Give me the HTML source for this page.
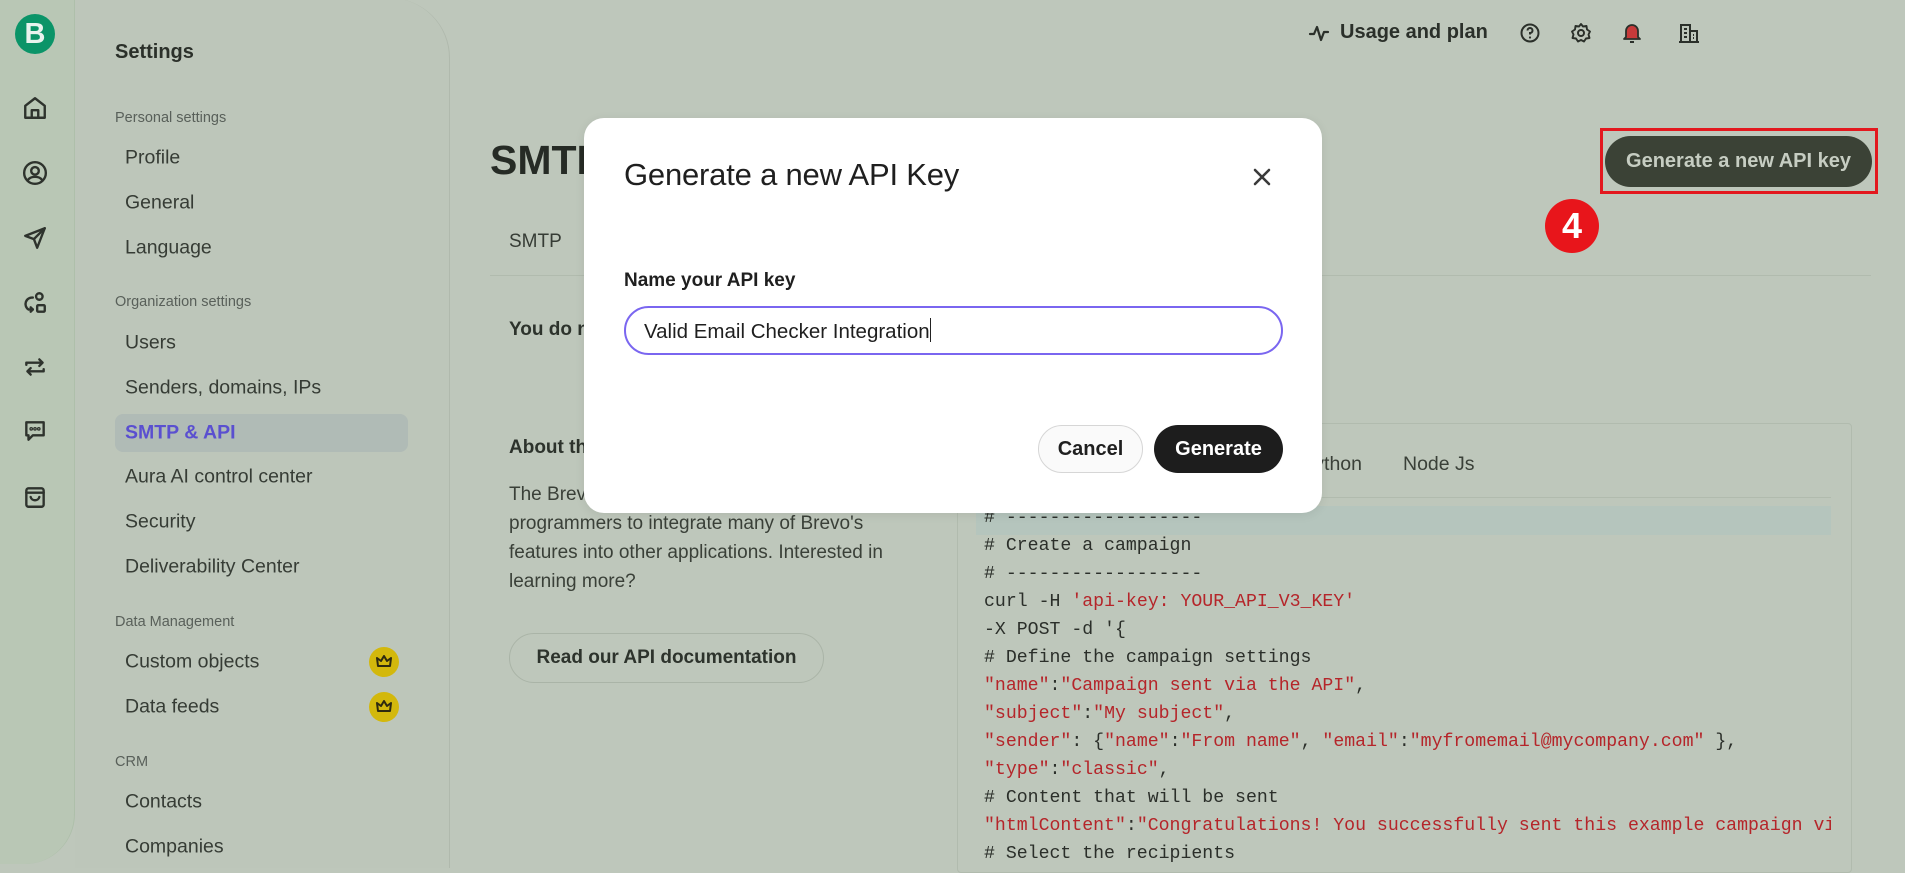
<!DOCTYPE html>
<html><head><meta charset="utf-8"><style>
*{margin:0;padding:0;box-sizing:border-box}
body{width:1905px;height:864px;overflow:hidden;background:#bec7bb;font-family:"Liberation Sans",sans-serif;color:#2d332c;position:relative}
.a{position:absolute;white-space:nowrap}
#rail{position:absolute;left:0;top:0;width:75px;height:864px;background:#b9c7b5;border-right:1px solid #aebfaa;border-bottom-right-radius:50px}
#panel{position:absolute;left:75px;top:-2px;width:375px;height:870px;border-right:1px solid #b0b9ad;border-top-right-radius:60px;background:#bdc6ba}
.lbl{font-size:14.5px;color:#59605a;left:115px}
.it{font-size:19.5px;color:#363c35;left:125px;transform:translateY(-50%)}
.ico{position:absolute;left:22px;width:26px;height:26px}
.ico path,.ico rect,.ico circle{fill:none;stroke:#2e332d;stroke-width:2.2;stroke-linecap:round;stroke-linejoin:round}
.crown{position:absolute;left:369px;width:30px;height:30px;border-radius:50%;background:#d3b80c}
.code{font-family:"Liberation Mono",monospace;font-size:18.2px;left:984px;color:#2b2f2a}
.r{color:#b5252a}
</style></head><body>
<div id="rail">
 <div class="a" style="left:15px;top:14px;width:40px;height:40px;border-radius:50%;background:#0b9468;color:#e8f3ee;font-weight:bold;font-size:29px;text-align:center;line-height:40px">B</div>
 <svg class="ico" style="top:95px" viewBox="0 0 24 24"><path d="M3 10 L12 3 L21 10 V21 H3 Z"/><path d="M9 21 V14 H15 V21"/></svg>
 <svg class="ico" style="top:160px" viewBox="0 0 24 24"><circle cx="12" cy="12" r="10"/><circle cx="12" cy="10" r="3.5"/><path d="M5.5 18.5 C8 14.5 16 14.5 18.5 18.5"/></svg>
 <svg class="ico" style="top:225px" viewBox="0 0 24 24"><path d="M21 3 L3 10 L11 13 L14 21 Z"/><path d="M21 3 L11 13"/></svg>
 <svg class="ico" style="top:290px" viewBox="0 0 24 24"><circle cx="16" cy="6" r="3"/><path d="M10 7 A6 6 0 0 0 6 18 L10 18"/><path d="M8 16 L10 18 L8 20"/><rect x="14" y="14" width="7" height="6" rx="1"/></svg>
 <svg class="ico" style="top:354px" viewBox="0 0 24 24"><path d="M4 10 V8 H19 M16 5 L19 8 L16 11"/><path d="M20 14 V16 H5 M8 13 L5 16 L8 19"/></svg>
 <svg class="ico" style="top:418px" viewBox="0 0 24 24"><path d="M4 4 H20 V16 H10 L6 20 V16 H4 Z"/><circle cx="8.5" cy="10" r=".6"/><circle cx="12" cy="10" r=".6"/><circle cx="15.5" cy="10" r=".6"/></svg>
 <svg class="ico" style="top:484px" viewBox="0 0 24 24"><rect x="4" y="4" width="16" height="17" rx="2"/><path d="M4 8 H20"/><path d="M8 12 C9 16 15 16 16 12"/></svg>
</div>
<div id="panel"></div>
<div class="a" style="left:115px;top:41px;font-size:20px;font-weight:bold;color:#2b302a">Settings</div>
<div class="a lbl" style="top:110px">Personal settings</div>
<div class="a it" style="top:158px">Profile</div>
<div class="a it" style="top:203px">General</div>
<div class="a it" style="top:248px">Language</div>
<div class="a lbl" style="top:294px">Organization settings</div>
<div class="a it" style="top:343px">Users</div>
<div class="a it" style="top:388px">Senders, domains, IPs</div>
<div class="a" style="left:115px;top:414px;width:293px;height:38px;border-radius:8px;background:#b0bbb6"></div>
<div class="a it" style="top:433px;color:#5a4fd0;font-weight:bold">SMTP &amp; API</div>
<div class="a it" style="top:477px">Aura AI control center</div>
<div class="a it" style="top:522px">Security</div>
<div class="a it" style="top:567px">Deliverability Center</div>
<div class="a lbl" style="top:614px">Data Management</div>
<div class="a it" style="top:662px">Custom objects</div>
<div class="a it" style="top:707px">Data feeds</div>
<div class="crown" style="top:647px"><svg width="30" height="30" viewBox="0 0 30 30"><path d="M9 19 L8 11 L12 14 L15 9 L18 14 L22 11 L21 19 Z" fill="none" stroke="#2e2a10" stroke-width="2" stroke-linejoin="round"/></svg></div>
<div class="crown" style="top:692px"><svg width="30" height="30" viewBox="0 0 30 30"><path d="M9 19 L8 11 L12 14 L15 9 L18 14 L22 11 L21 19 Z" fill="none" stroke="#2e2a10" stroke-width="2" stroke-linejoin="round"/></svg></div>
<div class="a lbl" style="top:754px">CRM</div>
<div class="a it" style="top:802px">Contacts</div>
<div class="a it" style="top:847px">Companies</div>

<svg class="a" style="left:1308px;top:22px" width="24" height="22" viewBox="0 0 24 22"><path d="M2 12 H6 L9 5 L13 18 L16 10 H20" fill="none" stroke="#2b302a" stroke-width="2.2" stroke-linejoin="round" stroke-linecap="round"/></svg>
<div class="a" style="left:1340px;top:21px;font-size:20px;font-weight:bold;color:#2b302a">Usage and plan</div>
<svg class="a" style="left:1519px;top:22px" width="22" height="22" viewBox="0 0 22 22"><circle cx="11" cy="11" r="8.5" fill="none" stroke="#2b302a" stroke-width="2"/><path d="M8.5 8.5 A2.5 2.5 0 1 1 11 11 V12.5" fill="none" stroke="#2b302a" stroke-width="2"/><circle cx="11" cy="15.5" r="1.1" fill="#2b302a"/></svg>
<svg class="a" style="left:1570px;top:22px" width="22" height="22" viewBox="0 0 22 22"><circle cx="11" cy="11" r="3" fill="none" stroke="#2b302a" stroke-width="2"/><path d="M11 2 L13 4.5 L16.5 4 L17 7.5 L20 9.5 L18.5 12.5 L19.5 16 L16 16.5 L14 19.5 L11 18 L8 19.5 L6 16.5 L2.5 16 L3.5 12.5 L2 9.5 L5 7.5 L5.5 4 L9 4.5 Z" fill="none" stroke="#2b302a" stroke-width="1.9" stroke-linejoin="round"/></svg>
<svg class="a" style="left:1621px;top:21px" width="22" height="24" viewBox="0 0 22 24"><path d="M5 16 V10 A6 6 0 0 1 17 10 V16 L19 18 H3 Z" fill="#c73a3a" stroke="#2b302a" stroke-width="1.8" stroke-linejoin="round"/><path d="M9 21 H13" stroke="#2b302a" stroke-width="2"/></svg>
<svg class="a" style="left:1678px;top:22px" width="22" height="22" viewBox="0 0 22 22"><path d="M3 20 V3 H12 V20 M12 9 H19 V20 M1 20 H21 M6 7 H9 M6 11 H9 M6 15 H9 M15 13 H16 M15 16 H16" fill="none" stroke="#2b302a" stroke-width="2"/></svg>

<div class="a" style="left:490px;top:137px;font-size:41px;font-weight:bold;color:#262b25">SMTP</div>
<div class="a" style="left:509px;top:231px;font-size:19px;color:#363c35">SMTP</div>
<div class="a" style="left:490px;top:275px;width:1381px;height:1px;background:#b1bbae"></div>
<div class="a" style="left:509px;top:319px;font-size:19px;font-weight:bold;color:#2d332c">You do not</div>
<div class="a" style="left:509px;top:437px;font-size:19px;font-weight:bold;color:#2d332c">About the Brevo API</div>
<div class="a" style="left:509px;top:480px;font-size:19px;line-height:29px;color:#3a4038;white-space:normal;width:450px">The Brevo API makes it easy for<br>programmers to integrate many of Brevo's<br>features into other applications. Interested in<br>learning more?</div>
<div class="a" style="left:509px;top:633px;width:315px;height:50px;border:1.5px solid #aab4a7;border-radius:25px;font-size:19px;font-weight:bold;line-height:47px;text-align:center;color:#2d332c">Read our API documentation</div>

<div class="a" style="left:957px;top:423px;width:895px;height:450px;border:1px solid #b1bbae;border-radius:4px"></div>
<div class="a" style="left:1240px;top:453px;width:122px;text-align:right;font-size:19.5px;color:#3a4038">Python</div>
<div class="a" style="left:1403px;top:453px;font-size:19.5px;color:#3a4038">Node Js</div>
<div class="a" style="left:976px;top:497px;width:855px;height:1px;background:#b1bbae"></div>
<div class="a" style="left:976px;top:506px;width:855px;height:29px;background:#b5c5bd"></div>
<div style="position:absolute;left:0;top:0;width:1831px;height:864px;overflow:hidden">
<div class="a code" style="top:508px">#&nbsp;------------------</div>
<div class="a code" style="top:536px"># Create a campaign</div>
<div class="a code" style="top:564px">#&nbsp;------------------</div>
<div class="a code" style="top:592px">curl -H <span class="r">'api-key: YOUR_API_V3_KEY'</span></div>
<div class="a code" style="top:620px">-X POST -d '{</div>
<div class="a code" style="top:648px"># Define the campaign settings</div>
<div class="a code" style="top:676px"><span class="r">"name"</span>:<span class="r">"Campaign sent via the API"</span>,</div>
<div class="a code" style="top:704px"><span class="r">"subject"</span>:<span class="r">"My subject"</span>,</div>
<div class="a code" style="top:732px"><span class="r">"sender"</span>: {<span class="r">"name"</span>:<span class="r">"From name"</span>, <span class="r">"email"</span>:<span class="r">"myfromemail@mycompany.com"</span> },</div>
<div class="a code" style="top:760px"><span class="r">"type"</span>:<span class="r">"classic"</span>,</div>
<div class="a code" style="top:788px"># Content that will be sent</div>
<div class="a code" style="top:816px"><span class="r">"htmlContent"</span>:<span class="r">"Congratulations! You successfully sent this example campaign via the API"</span></div>
<div class="a code" style="top:844px"># Select the recipients</div>
</div>

<div class="a" style="left:1600px;top:128px;width:278px;height:66px;border:3px solid #e3181e"></div>
<div class="a" style="left:1605px;top:136px;width:267px;height:51px;border-radius:26px;background:#3b4236;color:#c6cdc2;font-size:20px;font-weight:bold;text-align:center;line-height:51px">Generate a new API key</div>
<div class="a" style="left:1545px;top:199px;width:54px;height:54px;border-radius:50%;background:#e8151b;color:#fff;font-size:36px;font-weight:bold;text-align:center;line-height:54px">4</div>

<div class="a" style="left:584px;top:118px;width:738px;height:395px;background:#fff;border-radius:20px;box-shadow:0 2px 10px rgba(0,0,0,.08)"></div>
<div class="a" style="left:624px;top:157px;font-size:31px;color:#1f1f1f;letter-spacing:-.2px">Generate a new API Key</div>
<svg class="a" style="left:1252px;top:167px" width="20" height="20" viewBox="0 0 20 20"><path d="M3 3 L17 17 M17 3 L3 17" stroke="#3a3a3a" stroke-width="2.6" stroke-linecap="round"/></svg>
<div class="a" style="left:624px;top:270px;font-size:19px;font-weight:bold;color:#1f1f1f">Name your API key</div>
<div class="a" style="left:624px;top:306px;width:659px;height:49px;border:2px solid #7a66f0;border-radius:25px"></div>
<div class="a" style="left:644px;top:318px;font-size:20.5px;color:#1f1f1f">Valid Email Checker Integration<span style="display:inline-block;width:1px;height:24px;background:#222;vertical-align:-4px"></span></div>
<div class="a" style="left:1038px;top:425px;width:105px;height:48px;border:1px solid #d6d6d6;border-radius:24px;background:#fafafa;font-size:20px;font-weight:bold;text-align:center;line-height:46px;color:#1f1f1f">Cancel</div>
<div class="a" style="left:1154px;top:425px;width:129px;height:48px;border-radius:24px;background:#1d1d1d;font-size:20px;font-weight:bold;text-align:center;line-height:48px;color:#fff">Generate</div>
</body></html>
